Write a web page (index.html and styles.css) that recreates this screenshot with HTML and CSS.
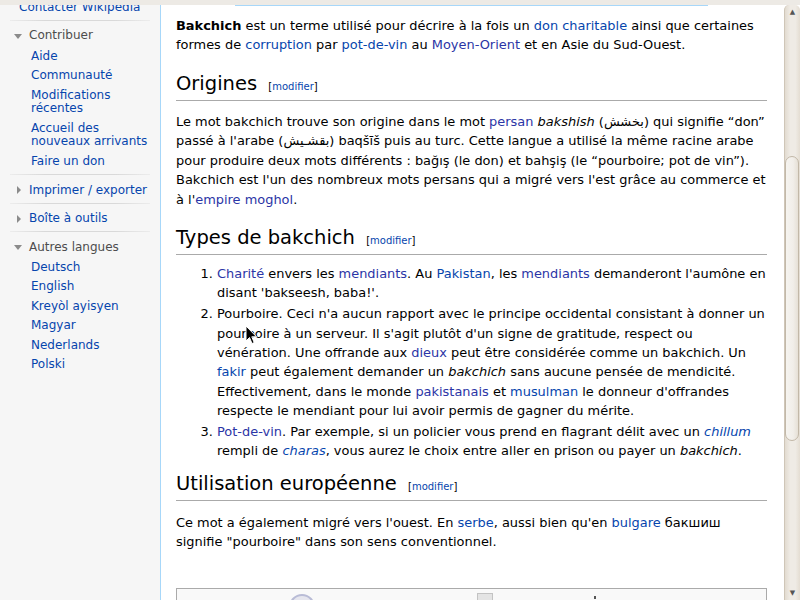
FILE: index.html
```html
<!DOCTYPE html>
<html lang="fr">
<head>
    <meta charset="UTF-8">
    <title>Bakchich — Wikipédia</title>
    <link rel="stylesheet" href="styles.css">
</head>
<body>
    <div class="chrome"></div>
    <div class="window">
        <div class="panel">
            <ul class="nav-list first">
                <li><a href="#">Contacter Wikipedia</a></li>
            </ul>

            <div class="sep"></div>
            <div class="portal">
                <h3 class="portal-head"><span class="arrow down"></span>Contribuer</h3>
                <ul class="nav-list">
                    <li><a href="#">Aide</a></li>
                    <li><a href="#">Communauté</a></li>
                    <li><a href="#">Modifications récentes</a></li>
                    <li><a href="#">Accueil des nouveaux arrivants</a></li>
                    <li><a href="#">Faire un don</a></li>
                </ul>
            </div>

            <div class="sep"></div>
            <div class="portal">
                <h3 class="portal-head collapsed"><span class="arrow right"></span>Imprimer / exporter</h3>
            </div>

            <div class="sep"></div>
            <div class="portal">
                <h3 class="portal-head collapsed"><span class="arrow right"></span>Boîte à outils</h3>
            </div>

            <div class="sep"></div>
            <div class="portal">
                <h3 class="portal-head"><span class="arrow down"></span>Autres langues</h3>
                <ul class="nav-list">
                    <li><a href="#">Deutsch</a></li>
                    <li><a href="#">English</a></li>
                    <li><a href="#">Kreyòl ayisyen</a></li>
                    <li><a href="#">Magyar</a></li>
                    <li><a href="#">Nederlands</a></li>
                    <li><a href="#">Polski</a></li>
                </ul>
            </div>
        </div>

        <div class="content">
            <p class="lead"><b>Bakchich</b> est un terme utilisé pour décrire à la fois un <a href="#">don charitable</a> ainsi que certaines formes de <a href="#">corruption</a> par <a href="#">pot-de-vin</a> au <a class="v" href="#">Moyen-Orient</a> et en Asie du Sud-Ouest.</p>

            <h2>Origines <span class="editsection">[<a href="#">modifier</a>]</span></h2>
            <p>Le mot bakchich trouve son origine dans le mot <a class="v" href="#">persan</a> <i>bakshish</i> (بخشش) qui signifie “don” passé à l'arabe (بقشـيش) baqšīš puis au turc. Cette langue a utilisé la même racine arabe pour produire deux mots différents : bağış (le don) et bahşiş (le “pourboire; pot de vin”). Bakchich est l'un des nombreux mots persans qui a migré vers l'est grâce au commerce et à l'<a class="v" href="#">empire moghol</a>.</p>

            <h2>Types de bakchich <span class="editsection">[<a href="#">modifier</a>]</span></h2>
            <ol>
                <li><a class="v" href="#">Charité</a> envers les <a class="v" href="#">mendiants</a>. Au <a href="#">Pakistan</a>, les <a class="v" href="#">mendiants</a> demanderont l'aumône en disant 'bakseesh, baba!'.</li>
                <li>Pourboire. Ceci n'a aucun rapport avec le principe occidental consistant à donner un pourboire à un serveur. Il s'agit plutôt d'un signe de gratitude, respect ou vénération. Une offrande aux <a class="v" href="#">dieux</a> peut être considérée comme un bakchich. Un <a href="#">fakir</a> peut également demander un <i>bakchich</i> sans aucune pensée de mendicité. Effectivement, dans le monde <a class="v" href="#">pakistanais</a> et <a href="#">musulman</a> le donneur d'offrandes respecte le mendiant pour lui avoir permis de gagner du mérite.</li>
                <li><a class="v" href="#">Pot-de-vin</a>. Par exemple, si un policier vous prend en flagrant délit avec un <a href="#"><i>chillum</i></a> rempli de <a href="#"><i>charas</i></a>, vous aurez le choix entre aller en prison ou payer un <i>bakchich</i>.</li>
            </ol>

            <h2>Utilisation européenne <span class="editsection">[<a href="#">modifier</a>]</span></h2>
            <p>Ce mot a également migré vers l'ouest. En <a href="#">serbe</a>, aussi bien qu'en <a href="#">bulgare</a> бакшиш signifie "pourboire" dans son sens conventionnel.</p>

            <div class="navbox">
                <span class="nb-globe"></span>
                <span class="nb-box"></span>
                <span class="nb-dot"></span>
            </div>
        </div>

        <div class="scrollbar">
            <div class="sb-arrow">▲</div>
            <div class="sb-track">
                <div class="sb-thumb"></div>
            </div>
            <div class="sb-arrow">▼</div>
        </div>
    </div>

    <svg class="cursor" width="13" height="21" viewBox="0 0 13 21">
        <path d="M1 1 L1 16 L4.5 12.5 L7 18.5 L9.2 17.6 L6.8 11.8 L11.5 11.8 Z" fill="#000" stroke="#fff" stroke-width="1"/>
    </svg>
</body>
</html>
```

FILE: styles.css
```css
body {
    margin: 0;
    font-family: "DejaVu Sans", sans-serif;
    background: #fff;
    color: #000;
    overflow: hidden;
    position: relative;
}

a {
    color: #0645ad;
    text-decoration: none;
}

a.v {
    color: #2b35a6;
}

/* browser chrome strip */
.chrome {
    height: 5px;
    background: #edeae5;
}

.window {
    display: flex;
    height: 595px;
    overflow: hidden;
}

/* left navigation panel */
.panel {
    width: 160px;
    flex: none;
    background: #f6f6f6;
    overflow: hidden;
    font-size: 12px;
}

.nav-list {
    list-style: none;
    margin: 0;
    padding: 0 0 3.25px 31px;
}

.nav-list li {
    line-height: 13.5px;
    padding: 3px 0;
}

.nav-list.first {
    margin-top: -7.25px;
    padding-left: 19px;
    padding-bottom: 2.75px;
}

.sep {
    height: 1px;
    margin: 0 10px;
    background: linear-gradient(to right, #ececec, #d9d9d9 25%, #d9d9d9 75%, #ececec);
}

.portal {
    padding-top: 8.25px;
}

.portal-head {
    display: flex;
    align-items: center;
    margin: 0 0 3.75px;
    padding-left: 14px;
    font-size: 12px;
    font-weight: normal;
    line-height: 13.5px;
    color: #4d4d4d;
}

.portal-head.collapsed {
    color: #0645ad;
    margin-bottom: 5.75px;
}

.arrow {
    display: inline-block;
    flex: none;
    width: 0;
    height: 0;
}

.arrow.down {
    margin-right: 7px;
    border-left: 4px solid transparent;
    border-right: 4px solid transparent;
    border-top: 5px solid #8b8b8b;
}

.arrow.right {
    margin-left: 3px;
    margin-right: 8px;
    border-top: 4px solid transparent;
    border-bottom: 4px solid transparent;
    border-left: 4px solid #8b8b8b;
}

/* article */
.content {
    flex: 1;
    min-width: 0;
    border-left: 1px solid #a7d7f9;
    padding: 0 17px 0 15px;
    font-size: 12.95px;
    line-height: 19.4px;
    background: linear-gradient(#a7d7f9, #a7d7f9) no-repeat 74px 0 / 473px 1px;
    overflow: hidden;
}

p {
    margin: 11.3px 0 6.5px;
}

p.lead {
    margin-top: 11px;
}

h2 {
    font-size: 19.5px;
    font-weight: normal;
    line-height: 24px;
    margin: 0;
    padding: 10.3px 0 4px;
    border-bottom: 1px solid #aaa;
}

.editsection {
    font-size: 10px;
    line-height: 1;
    margin-left: 5px;
}

ol {
    margin: 9.3px 0 0 41px;
    padding: 0;
}

ol li {
    margin-bottom: 1.3px;
}

.navbox {
    display: flex;
    align-items: flex-start;
    margin-top: 36.5px;
    height: 30px;
    border: 1px solid #aaa;
    background: #f9f9f9;
}

.nb-globe {
    width: 22px;
    height: 22px;
    margin: 5px 0 0 112px;
    border-radius: 50%;
    border: 2px solid #b9bcd6;
    background: #e6e6ee;
}

.nb-box {
    width: 14px;
    height: 14px;
    margin: 4px 0 0 162px;
    border: 1px solid #c3c3c3;
    background: #e4e4e4;
}

.nb-dot {
    width: 2px;
    height: 3px;
    margin: 7px 0 0 101px;
    background: #555;
}

/* gtk style scrollbar */
.scrollbar {
    width: 15px;
    flex: none;
    display: flex;
    flex-direction: column;
    border-left: 1px solid #cfc6b8;
    border-radius: 5px 5px 0 0;
    background: linear-gradient(to right, #e2dbd0, #efebe5 35%, #efebe5 70%, #e4ddd2);
}

.sb-arrow {
    height: 14px;
    font-size: 7px;
    line-height: 14px;
    text-align: center;
    color: #555;
    flex: none;
}

.sb-track {
    flex: 1;
    padding-top: 137px;
}

.sb-thumb {
    height: 283px;
    margin: 0 1px 0 0;
    border: 1px solid #c2b8a8;
    border-radius: 7px;
    background: linear-gradient(to right, #f6f4f0, #f1eee9 60%, #e6e0d6);
}

.cursor {
    position: absolute;
    left: 245px;
    top: 325px;
}
```
